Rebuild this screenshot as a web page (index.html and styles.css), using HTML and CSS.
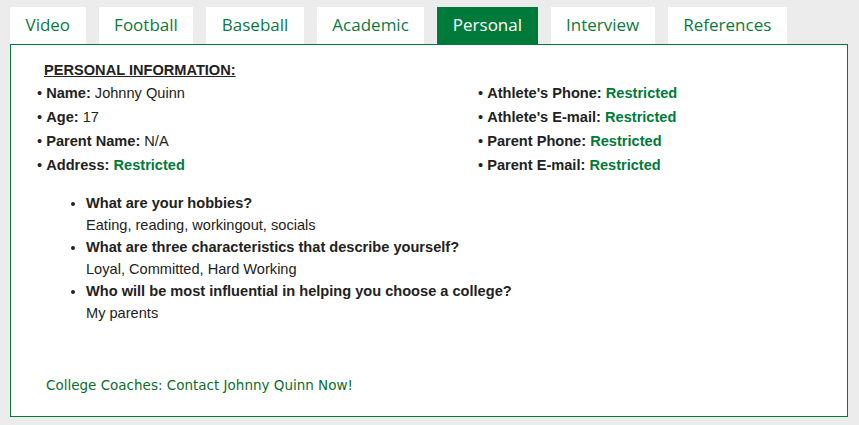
FILE: index.html
```html
<!DOCTYPE html>
<html>
  <head>
    <meta charset="utf-8" />
    <title>Personal</title>
    <link rel="stylesheet" href="styles.css">
  </head>
  <body>
    <div class="tabs">
      <a class="tab">Video</a>
      <a class="tab">Football</a>
      <a class="tab">Baseball</a>
      <a class="tab">Academic</a>
      <a class="tab active">Personal</a>
      <a class="tab">Interview</a>
      <a class="tab">References</a>
    </div>
    <div class="panel">
      <h3 class="title">PERSONAL INFORMATION:</h3>
      <div class="info">
        <div class="col">
          <p>&bull; <b>Name:</b> Johnny Quinn</p>
          <p>&bull; <b>Age:</b> 17</p>
          <p>&bull; <b>Parent Name:</b> N/A</p>
          <p>&bull; <b>Address:</b> <span class="restricted">Restricted</span></p>
        </div>
        <div class="col">
          <p>&bull; <b>Athlete's Phone:</b> <span class="restricted">Restricted</span></p>
          <p>&bull; <b>Athlete's E-mail:</b> <span class="restricted">Restricted</span></p>
          <p>&bull; <b>Parent Phone:</b> <span class="restricted">Restricted</span></p>
          <p>&bull; <b>Parent E-mail:</b> <span class="restricted">Restricted</span></p>
        </div>
      </div>
      <ul class="questions">
        <li><b>What are your hobbies?</b><br>Eating, reading, workingout, socials</li>
        <li><b>What are three characteristics that describe yourself?</b><br>Loyal, Committed, Hard Working</li>
        <li><b>Who will be most influential in helping you choose a college?</b><br>My parents</li>
      </ul>
      <a class="contact">College Coaches: Contact Johnny Quinn Now!</a>
    </div>
  </body>
</html>
```

FILE: styles.css
```css
* {
  margin: 0;
  padding: 0;
}
body {
  background: #ececec;
  font-family: "Liberation Sans", Arial, sans-serif;
  font-size: 14.6px;
  color: #222;
}
.tabs {
  display: flex;
  gap: 13px;
  padding: 7px 0 0 10px;
}
.tab {
  display: block;
  height: 37px;
  line-height: 36px;
  padding: 0 15.5px;
  background: #fff;
  color: #0b7a3e;
  font-family: "Open Sans", "DejaVu Sans", sans-serif;
  font-size: 17px;
  position: relative;
}
.tab.active {
  background: #007a3a;
  color: #fff;
}
/* green dot under the active tab */
.tab.active::after {
  content: "";
  position: absolute;
  left: 50%;
  bottom: -10px;
  width: 20px;
  height: 20px;
  margin-left: -10px;
  border-radius: 50%;
  background: #007a3a;
}
.panel {
  width: 838px;
  height: 373px;
  margin-left: 10px;
  border: 1px solid #007a3a;
  background: #fff;
  padding: 0 0 0 26px;
  box-sizing: border-box;
  position: relative;
}
.title {
  font-size: 14.6px;
  font-weight: bold;
  text-decoration: underline;
  padding: 16px 0 0 7px;
  line-height: 18px;
}
.info {
  display: grid;
  grid-template-columns: 441px 1fr;
  padding-top: 2px;
}
.info p {
  line-height: 24px;
}
.restricted {
  color: #007a3a;
  font-weight: bold;
}
.questions {
  margin: 15px 0 0 49px;
  line-height: 22px;
}
.contact {
  display: block;
  margin: 53px 0 0 9px;
  color: #0b6e2a;
  font-family: "DejaVu Sans", sans-serif;
  font-size: 13.5px;
}
```
